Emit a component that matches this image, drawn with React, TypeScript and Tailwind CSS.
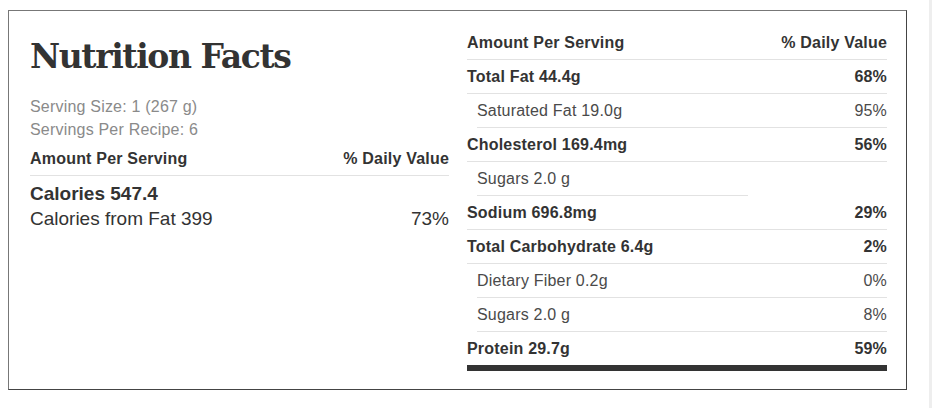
type Row = {
  label: string;
  pct?: string;
  bold?: boolean;
  short?: boolean;
};

const rows: Row[] = [
  { label: "Total Fat 44.4g", pct: "68%", bold: true },
  { label: "Saturated Fat 19.0g", pct: "95%" },
  { label: "Cholesterol 169.4mg", pct: "56%", bold: true },
  { label: "Sugars 2.0 g", short: true },
  { label: "Sodium 696.8mg", pct: "29%", bold: true },
  { label: "Total Carbohydrate 6.4g", pct: "2%", bold: true },
  { label: "Dietary Fiber 0.2g", pct: "0%" },
  { label: "Sugars 2.0 g", pct: "8%" },
];

export default function App() {
  return (
    <div className="flex h-[408px] w-[932px] bg-white font-['Liberation_Sans',Arial,sans-serif] text-[#333]">
      <div className="pl-[8px] pt-[10px]">
        <div className="flex h-[380px] w-[899px] gap-[18px] border border-[#777] border-r-[#444] border-b-[#444] pl-[21px] pr-[19px] pt-[15px]">
          {/* Левая колонка: заголовок и калории */}
          <div className="w-[419px]">
            <h1 className="mt-[14px] font-['DejaVu_Serif',serif] text-[33px] leading-[33px] font-bold tracking-[-1.4px] text-[#333]">
              Nutrition Facts
            </h1>
            <div className="mt-[22px] text-[16px] leading-[23px] tracking-[0.2px] text-[#8a8a8a]">
              <p>Serving Size: 1 (267 g)</p>
              <p>Servings Per Recipe: 6</p>
            </div>
            <div className="mt-[6px] flex justify-between border-b border-[#e2e2e2] pb-[5px] text-[16px] leading-[23px] font-bold tracking-[0.2px]">
              <span>Amount Per Serving</span>
              <span>% Daily Value</span>
            </div>
            <div className="mt-[5px] text-[19px] leading-[25px]">
              <p className="font-bold">Calories 547.4</p>
              <div className="flex justify-between">
                <span>Calories from Fat 399</span>
                <span>73%</span>
              </div>
            </div>
          </div>

          {/* Правая колонка: таблица */}
          <div className="w-[420px] text-[16px] leading-[33px] tracking-[0.2px]">
            <div className="flex justify-between border-b border-[#e2e2e2] font-bold">
              <span>Amount Per Serving</span>
              <span>% Daily Value</span>
            </div>
            {rows.map((r, i) => (
              <div
                key={i}
                className={
                  r.bold
                    ? "flex justify-between border-b border-[#e2e2e2] font-bold text-[#333]"
                    : r.short
                      ? "ml-[10px] flex w-[271px] justify-between border-b border-[#e2e2e2] text-[#4a4a4a]"
                      : "ml-[10px] flex justify-between border-b border-[#e2e2e2] text-[#4a4a4a]"
                }
              >
                <span>{r.label}</span>
                {r.pct && <span>{r.pct}</span>}
              </div>
            ))}
            <div className="flex justify-between font-bold">
              <span>Protein 29.7g</span>
              <span>59%</span>
            </div>
            <div className="h-[6px] bg-[#333]"></div>
          </div>
        </div>
      </div>
      <div className="ml-auto w-[3px] bg-[#eeeeee]"></div>
    </div>
  );
}
